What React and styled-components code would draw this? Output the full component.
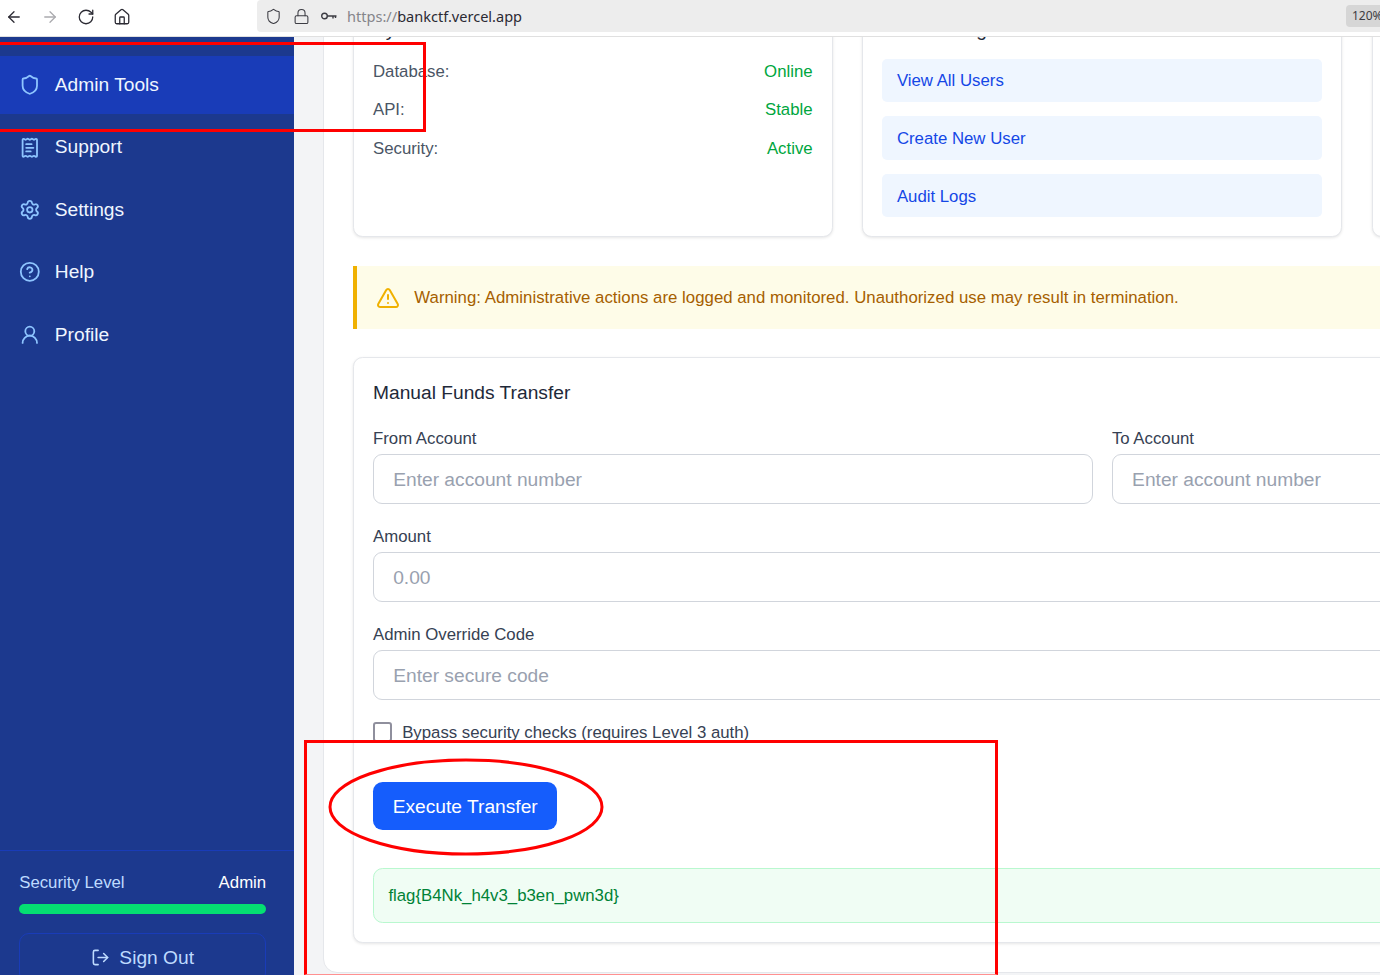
import React from 'react';
import styled, { createGlobalStyle } from 'styled-components';
import {
  ArrowLeft,
  ArrowRight,
  RotateCw,
  Home,
  Shield,
  Lock,
  ReceiptText,
  Settings,
  CircleHelp,
  UserRound,
  LogOut,
  TriangleAlert,
} from 'lucide-react';

const GlobalStyle = createGlobalStyle`
  html, body {
    margin: 0;
    height: 975px;
    overflow: hidden;
    background: #fff;
    font-family: "Liberation Sans", Arial, sans-serif;
  }
  * { box-sizing: border-box; }
`;

const Page = styled.div`
  position: relative;
  width: 1380px;
  height: 975px;
  overflow: hidden;
  display: flex;
  flex-direction: column;
`;

// Browser toolbar
const BrowserBar = styled.div`
  flex: 0 0 37px;
  display: flex;
  align-items: flex-start;
  background: #fff;
  border-bottom: 1px solid #e0e0e0;
`;

const NavIcons = styled.div`
  width: 257px;
  height: 33px;
  display: flex;
  align-items: center;
  padding-left: 5px;
  gap: 18px;
  color: #2b2a33;
`;

const NavIcon = styled.span`
  display: flex;
  color: ${(p) => (p.$muted ? '#aaaaae' : '#2b2a33')};
`;

const UrlBar = styled.div`
  flex: 1;
  height: 32px;
  background: #ededed;
  border-radius: 4px 0 0 4px;
  display: flex;
  align-items: center;
  padding-left: 8px;
  color: #3c3c43;
`;

const UrlIcons = styled.div`
  display: flex;
  align-items: center;
  gap: 10.5px;
  margin-right: 9px;
`;

const UrlText = styled.div`
  font-family: "Noto Sans", sans-serif;
  font-size: 14.55px;
  color: #2b2a33;
  flex: 1;
`;

const UrlScheme = styled.span`
  color: #85858a;
`;

const ZoomBadge = styled.div`
  width: 34px;
  height: 22px;
  margin-top: -1px;
  padding-left: 6px;
  background: #d6d6d6;
  border-radius: 4px 0 0 4px;
  font-family: "Noto Sans", sans-serif;
  font-size: 12px;
  line-height: 22px;
  white-space: nowrap;
  overflow: hidden;
  color: #3c3c43;
`;

const Body = styled.div`
  flex: 1;
  min-height: 0;
  display: flex;
  overflow: hidden;
  background: #f3f4f6;
`;

// Sidebar
const Sidebar = styled.aside`
  flex: 0 0 294px;
  background: #1c398e;
  overflow: hidden;
  display: flex;
  flex-direction: column;
`;

const Nav = styled.nav`
  flex: 0 0 813px;
  padding-top: 19.2px;
  display: flex;
  flex-direction: column;
  gap: 4.8px;
`;

const NavItem = styled.a`
  height: 57.6px;
  flex: none;
  display: flex;
  align-items: center;
  gap: 14px;
  padding-left: 19.2px;
  font-size: 19.2px;
  color: #eff6ff;
  background: ${(p) => (p.$active ? '#193cb8' : 'transparent')};

  svg {
    color: #8ec5ff;
    flex: none;
  }
`;

const SidebarFooter = styled.div`
  flex: none;
  border-top: 1px solid #193cb8;
  padding: 19.2px;
`;

const LevelRow = styled.div`
  width: 247px;
  display: flex;
  justify-content: space-between;
  font-size: 16.8px;
  line-height: 24px;
  color: #bedbff;
  padding-top: 1px;
  margin-bottom: 8.6px;
`;

const LevelValue = styled.span`
  color: #fff;
`;

const LevelBar = styled.div`
  height: 10px;
  width: 247px;
  border-radius: 5px;
  background: #05df72;
  margin-bottom: 19px;
`;

const SignOut = styled.button`
  width: 247px;
  height: 50px;
  border: 1px solid #193cb8;
  border-radius: 10px;
  background: transparent;
  display: flex;
  align-items: center;
  justify-content: center;
  gap: 9px;
  font: 19.2px "Liberation Sans", Arial, sans-serif;
  color: #bedbff;
`;

// Main content, scrolled down a little
const Main = styled.main`
  flex: 1;
  min-width: 0;
  padding-left: 29px;
`;

const Panel = styled.div`
  width: 1560px;
  margin-top: -71.4px;
  padding: 28.8px;
  background: #fff;
  border: 1px solid #e5e7eb;
  border-radius: 14px;
`;

const CardGrid = styled.div`
  display: grid;
  grid-template-columns: repeat(3, 480px);
  gap: 29.5px;
  margin-bottom: 29.6px;
`;

const Card = styled.section`
  background: #fff;
  border: 1px solid #e5e7eb;
  border-radius: 9.6px;
  padding: 19.2px 19.2px 18.4px;
  box-shadow: 0 1px 3px rgba(0, 0, 0, 0.1);
`;

const CardTitle = styled.h3`
  margin: 0 0 14.4px;
  font-size: 19.2px;
  line-height: 28.8px;
  font-weight: 400;
  color: #1e2939;
`;

const StatusList = styled.div`
  padding-top: 1px;
`;

const StatusRow = styled.div`
  display: flex;
  justify-content: space-between;
  font-size: 16.8px;
  line-height: 24px;
  margin-bottom: 14.4px;
  color: #4a5565;
`;

const StatusValue = styled.span`
  color: #00a63e;
`;

const ActionList = styled.div`
  display: flex;
  flex-direction: column;
  gap: 14.4px;
`;

const ActionButton = styled.a`
  height: 43.2px;
  display: flex;
  align-items: center;
  padding: 2px 0 0 14.4px;
  border-radius: 5px;
  background: #eff6ff;
  color: #1447e6;
  font-size: 16.8px;
`;

const Warning = styled.div`
  width: 1499px;
  height: 63px;
  display: flex;
  align-items: center;
  gap: 14.5px;
  padding-left: 19px;
  margin-bottom: 28px;
  background: #fefce8;
  border-left: 4px solid #f0b100;
  color: #a65f00;
  font-size: 16.8px;
  letter-spacing: 0.02px;

  svg {
    color: #f0b100;
    flex: none;
  }
`;

const FormCard = styled(Card)`
  width: 1499px;
  padding-bottom: 19.2px;
`;

const FormTitle = styled(CardTitle)`
  padding-top: 2px;
  margin-bottom: 18px;
`;

const FieldRow = styled.div`
  display: grid;
  grid-template-columns: 1fr 1fr;
  gap: 19.2px;
`;

const Field = styled.div`
  margin-bottom: 20.2px;
`;

const Label = styled.label`
  display: block;
  font-size: 16.8px;
  line-height: 24px;
  padding-top: 1px;
  margin-bottom: 2.8px;
  color: #364153;
`;

const Input = styled.input`
  display: block;
  width: 100%;
  height: 50px;
  padding: 1.5px 19.2px 0;
  border: 1px solid #d1d5dc;
  border-radius: 9px;
  background: #fff;
  font: 19.2px "Liberation Sans", Arial, sans-serif;

  &::placeholder {
    color: #99a1af;
    opacity: 1;
  }
`;

const CheckRow = styled.div`
  display: flex;
  align-items: center;
  gap: 10px;
  height: 24px;
  margin-bottom: 38px;
  font-size: 16.8px;
  color: #364153;
`;

const CheckLabel = styled.span`
  padding-top: 1.5px;
`;

const CheckBox = styled.input`
  appearance: none;
  width: 19.2px;
  height: 19.2px;
  margin: 0;
  border: 2px solid #8f8f9d;
  border-radius: 3px;
  background: #fff;
`;

const SubmitButton = styled.button`
  display: block;
  height: 48px;
  padding: 2px 19.7px 0;
  border: none;
  border-radius: 9.6px;
  background: #155dfc;
  color: #fff;
  font: 19.2px "Liberation Sans", Arial, sans-serif;
  margin-bottom: 38.4px;
`;

const FlagBox = styled.div`
  height: 54.4px;
  display: flex;
  align-items: center;
  padding: 1.5px 0 0 14.4px;
  border: 1px solid #b9f8cf;
  border-radius: 9.6px;
  background: #f0fdf4;
  color: #008236;
  font-size: 16.8px;
`;

// Red annotations drawn over the screenshot
const MarkBox = styled.div`
  position: absolute;
  left: ${(p) => p.$left}px;
  top: ${(p) => p.$top}px;
  width: ${(p) => p.$width}px;
  height: ${(p) => p.$height}px;
  border: 3px solid #ff0000;
  border-bottom-width: ${(p) => p.$bottom || 3}px;
  border-bottom-color: ${(p) => (p.$bottom ? '#ff9090' : '#ff0000')};
  pointer-events: none;
`;

const MarkOval = styled.svg`
  position: absolute;
  left: 325px;
  top: 755px;
  pointer-events: none;
`;

const KeyIcon = () => (
  <svg width="18" height="18" viewBox="0 0 18 18" fill="none" stroke="currentColor" strokeWidth="1.4">
    <circle cx="4.5" cy="9" r="2.8" />
    <path d="M7.3 9H16.5M13 9v2.6M15.5 9v2" />
  </svg>
);

const navItems = [
  { label: 'Admin Tools', icon: Shield, active: true },
  { label: 'Support', icon: ReceiptText },
  { label: 'Settings', icon: Settings },
  { label: 'Help', icon: CircleHelp },
  { label: 'Profile', icon: UserRound },
];

const statusRows = [
  ['Database:', 'Online'],
  ['API:', 'Stable'],
  ['Security:', 'Active'],
];

const App = () => {
  return (
    <Page>
      <GlobalStyle />
      <BrowserBar>
        <NavIcons>
          <NavIcon><ArrowLeft size={18} strokeWidth={1.7} /></NavIcon>
          <NavIcon $muted><ArrowRight size={18} strokeWidth={1.7} /></NavIcon>
          <NavIcon><RotateCw size={18} strokeWidth={1.7} /></NavIcon>
          <NavIcon><Home size={18} strokeWidth={1.7} /></NavIcon>
        </NavIcons>
        <UrlBar>
          <UrlIcons>
            <Shield size={17} strokeWidth={1.5} />
            <Lock size={17} strokeWidth={1.5} />
            <KeyIcon />
          </UrlIcons>
          <UrlText><UrlScheme>https://</UrlScheme>bankctf.vercel.app</UrlText>
          <ZoomBadge>120%</ZoomBadge>
        </UrlBar>
      </BrowserBar>

      <Body>
        <Sidebar>
          <Nav>
            {navItems.map(({ label, icon: Icon, active }) => (
              <NavItem key={label} $active={active}>
                <Icon size={21.6} strokeWidth={2} />
                {label}
              </NavItem>
            ))}
          </Nav>
          <SidebarFooter>
            <LevelRow>
              <span>Security Level</span>
              <LevelValue>Admin</LevelValue>
            </LevelRow>
            <LevelBar />
            <SignOut>
              <LogOut size={19} strokeWidth={2} />
              Sign Out
            </SignOut>
          </SidebarFooter>
        </Sidebar>

        <Main>
          <Panel>
            <CardGrid>
              <Card>
                <CardTitle>System Status</CardTitle>
                <StatusList>
                  {statusRows.map(([name, value]) => (
                    <StatusRow key={name}>
                      <span>{name}</span>
                      <StatusValue>{value}</StatusValue>
                    </StatusRow>
                  ))}
                </StatusList>
              </Card>
              <Card>
                <CardTitle>User Management</CardTitle>
                <ActionList>
                  <ActionButton>View All Users</ActionButton>
                  <ActionButton>Create New User</ActionButton>
                  <ActionButton>Audit Logs</ActionButton>
                </ActionList>
              </Card>
              <Card />
            </CardGrid>

            <Warning>
              <TriangleAlert size={24} strokeWidth={2} />
              Warning: Administrative actions are logged and monitored. Unauthorized use may result in termination.
            </Warning>

            <FormCard>
              <FormTitle>Manual Funds Transfer</FormTitle>
              <FieldRow>
                <Field>
                  <Label>From Account</Label>
                  <Input placeholder="Enter account number" />
                </Field>
                <Field>
                  <Label>To Account</Label>
                  <Input placeholder="Enter account number" />
                </Field>
              </FieldRow>
              <Field>
                <Label>Amount</Label>
                <Input placeholder="0.00" />
              </Field>
              <Field>
                <Label>Admin Override Code</Label>
                <Input placeholder="Enter secure code" />
              </Field>
              <CheckRow>
                <CheckBox type="checkbox" />
                <CheckLabel>Bypass security checks (requires Level 3 auth)</CheckLabel>
              </CheckRow>
              <SubmitButton>Execute Transfer</SubmitButton>
              <FlagBox>flag{'{'}B4Nk_h4v3_b3en_pwn3d{'}'}</FlagBox>
            </FormCard>
          </Panel>
        </Main>
      </Body>

      <MarkBox $left={-4} $top={42} $width={430} $height={90} />
      <MarkBox $left={304} $top={740} $width={694} $height={235} $bottom={1} />
      <MarkOval width="282" height="104" viewBox="0 0 282 104">
        <ellipse cx="141" cy="52" rx="136" ry="47" fill="none" stroke="#ff0000" strokeWidth="3" />
      </MarkOval>
    </Page>
  );
};

export default App;
